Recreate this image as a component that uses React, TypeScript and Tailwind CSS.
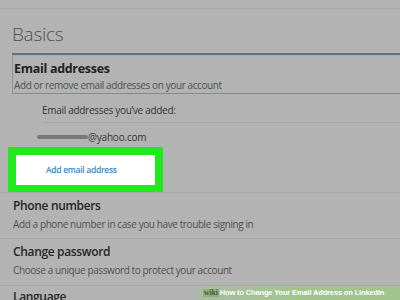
import React from "react";

const line = "border-b border-[#a7a7a7]";

function Section({ title, desc, h }: { title: string; desc: string; h: string }) {
  return (
    <div className={`${h} pl-[13px] pt-[5px] ${line}`}>
      <p className="text-[12px] font-semibold leading-[16px] tracking-[-0.35px] text-[#262626]">{title}</p>
      <p className="mt-[3px] text-[10px] leading-[14px] tracking-[-0.4px] text-[#505050]">{desc}</p>
    </div>
  );
}

export default function App() {
  return (
    <div className="relative h-[300px] w-[400px] overflow-hidden bg-[#b3b3b3] font-['Open_Sans',sans-serif]">
      <div className={`h-[9px] ${line}`} />
      <div className="h-[44px] pl-[12px] pt-[13px] text-[19px] font-light leading-[24px] tracking-[-0.3px] text-[#4f4f4f]">
        Basics
      </div>

      <div className="ml-[12px] border-t-2 border-[#5c7282]">
        <div className="h-[39px] border-b border-l border-t border-b-[#7d8b95] border-l-[#8a98a2] border-t-[#a3adb4] pl-[1px] pt-[4px]">
          <p className="text-[12.5px] font-bold leading-[17px] tracking-[-0.3px] text-[#222]">Email addresses</p>
          <p className="mt-[1px] text-[10px] leading-[14px] tracking-[-0.4px] text-[#505050]">
            Add or remove email addresses on your account
          </p>
        </div>
      </div>

      <div className="pl-[42px]">
        <div className="h-[29px] border-b border-[#aaaaaa] pt-[9px] text-[10px] leading-[14px] tracking-[-0.3px] text-[#333]">
          Email addresses you’ve added:
        </div>
      </div>
      <div className="flex h-[24px] items-center pl-[37px] pt-[4px]">
        <span className="h-[4px] w-[51px] rounded-full bg-[#777] blur-[0.6px]" />
        <span className="text-[10px] leading-[14px] tracking-[-0.2px] text-[#333]">@yahoo.com</span>
      </div>

      <div className={line}>
        <div className="ml-[8px] w-[155px] bg-[#22e81f] px-[8px] pb-[7px] pt-[8px]">
          <div className="flex h-[30px] items-center bg-white pl-[30px] text-[8.5px] font-semibold tracking-[-0.3px] text-[#3d86bd]">
            Add email address
          </div>
        </div>
      </div>

      <Section h="h-[46px]" title="Phone numbers" desc="Add a phone number in case you have trouble signing in" />
      <Section h="h-[47px]" title="Change password" desc="Choose a unique password to protect your account" />
      <div className="pl-[13px] pt-[3px]">
        <p className="text-[12px] font-semibold leading-[16px] tracking-[-0.35px] text-[#262626]">Language</p>
      </div>

      <div className="absolute bottom-0 right-0 flex h-[14px] w-[204px] items-center whitespace-nowrap bg-gradient-to-r from-[#9fc68a]/40 via-[#9fc68a]/90 to-[#9fc68a]/90 pl-[7px] text-[7.5px] font-bold leading-none">
        <span className="bg-[#8fae7e] px-[1px] font-['Liberation_Serif',serif] text-[#4a5a3c]">wiki</span>
        <span className="ml-[1px] font-['Liberation_Sans',sans-serif] tracking-[-0.15px] text-white">
          How to Change Your Email Address on Linkedin
        </span>
      </div>
    </div>
  );
}
